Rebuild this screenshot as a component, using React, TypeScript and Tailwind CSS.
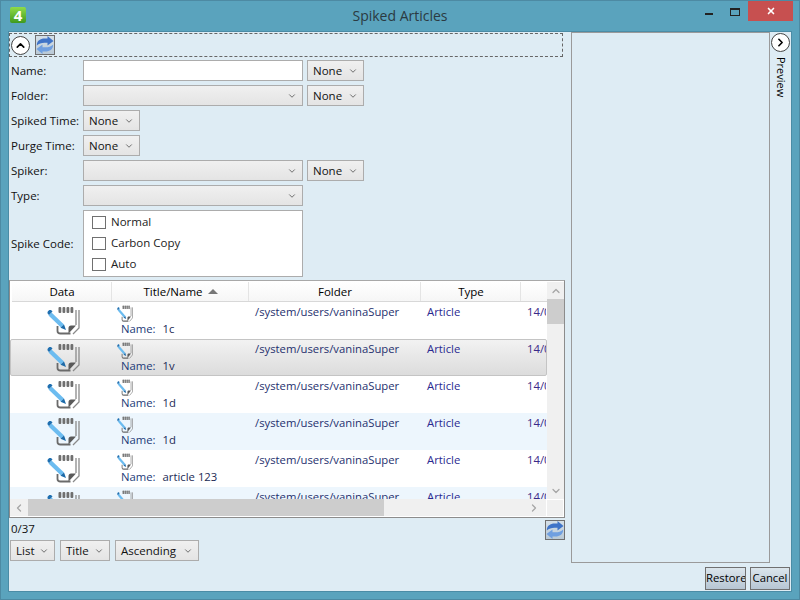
import { ChevronDown, ChevronLeft, ChevronRight, ChevronUp, X } from "lucide-react";

const rows = [
  { name: "1c", kind: "plain" },
  { name: "1v", kind: "selected" },
  { name: "1d", kind: "plain" },
  { name: "1d", kind: "alt" },
  { name: "article 123", kind: "plain" },
  { name: "", kind: "alt" },
];

function SpikeIcon({ className }: { className: string }) {
  return (
    <svg viewBox="0 0 33 29" preserveAspectRatio="none" className={className}>
      <g fill="#6f6f6f">
        <rect x="11.5" y="1" width="2.8" height="6" rx="1" />
        <rect x="15.500" y="1" width="2.8" height="6" rx="1" />
        <rect x="19.500" y="1" width="2.8" height="6" rx="1" />
        <rect x="23.500" y="1" width="2.8" height="6" rx="1" />
      </g>
      <path d="M29 4v15M32 4v18l-6 6" fill="none" stroke="#8a8a8a" strokeWidth="1.3" />
      <path d="M10.500 20v5c0 2 1 2.500 3 2.500h10" fill="none" stroke="#6a6a6a" strokeWidth="1.8" />
      <path d="M29 19.500h-5c-1.500 0-2.500 1-2.500 2.500v5.500z" fill="#5a5a5a" />
      <path d="M4.500 6.500l12.500 12 -3 3L1.500 9.500z" fill="#6cbcf0" />
      <path d="M.8 5.500c.7-1.500 2.300-2 3.500-1.200l1.200 1.200 -3.500 3.500 -1-1c-.6-.7-.7-1.600-.2-2.500z" fill="#1f6fb0" />
      <path d="M17 18.500l2 5.500 -5.500-2.200z" fill="#1d6aa8" />
    </svg>
  );
}

function RefreshButton() {
  return (
    <button type="button" className="flex h-[20px] w-[20px] items-center justify-center border border-[#707070] bg-[linear-gradient(#d5e0e8,#b9c9d6)]">
      <svg viewBox="0 0 18 18" className="h-[18px] w-[18px]">
        <path d="M.8 9.500C.8 4.500 4.500 2.500 8.500 2.500h3V0L17.500 5l-6 4.500V6.700H8.500C5.500 6.700 2.800 7.500.8 9.500z" fill="#3f74c8" />
        <path d="M17.200 8.500c0 5-3.700 7-7.700 7h-3V18L.5 13l6-4.500v2.800h3c3 0 5.700-.8 7.700-2.800z" fill="#6f9fe0" />
      </svg>
    </button>
  );
}

function RoundButton({ direction }: { direction: "up" | "right" }) {
  return (
    <button type="button" className="flex h-[19px] w-[19px] items-center justify-center rounded-full border border-[#444] bg-white">
      {direction === "up" ? (
        <ChevronUp className="h-[13px] w-[13px] text-black" strokeWidth={3} />
      ) : (
        <ChevronRight className="h-[13px] w-[13px] text-black" strokeWidth={3} />
      )}
    </button>
  );
}

function Combo({ label, className }: { label?: string; className: string }) {
  return (
    <div className={`flex h-[21px] items-center justify-between border border-[#acacac] bg-[linear-gradient(#f0f0f0,#e4e4e4)] pl-[5px] pr-[5px] text-[#111] ${className}`}>
      <span>{label}</span>
      <ChevronDown className="h-[10px] w-[10px] text-[#555]" strokeWidth={2} />
    </div>
  );
}

function FieldRow({ label, children }: { label: string; children: React.ReactNode }) {
  return (
    <div className="flex h-[21px] items-center">
      <label className="w-[74px] shrink-0 pl-[2px] text-[#111]">{label}</label>
      <div className="flex items-center gap-[4px]">{children}</div>
    </div>
  );
}

function Check({ label }: { label: string }) {
  return (
    <div className="flex h-[21px] items-center gap-[5px] text-[#222]">
      <span className="h-[13px] w-[14px] border border-[#707070] bg-white" />
      <span className="pb-[2px]">{label}</span>
    </div>
  );
}

function HeaderCell({ className, children }: { className: string; children: React.ReactNode }) {
  return (
    <div className={`flex h-full shrink-0 items-center justify-center border-r border-[#e4e4e4] pl-[1px] text-black ${className}`}>
      {children}
    </div>
  );
}

function ResultRow({ name, kind }: { name: string; kind: string }) {
  const tone =
    kind === "selected"
      ? "rounded-[2px] border border-[#c4c4c4] bg-[linear-gradient(#f2f2f2,#dcdcdc)]"
      : kind === "alt"
        ? "border border-transparent bg-[#edf6fd]"
        : "border border-transparent bg-white";
  return (
    <div className={`flex h-[37px] shrink-0 text-[11.3px] ${tone}`}>
      <div className="flex w-[101px] shrink-0 justify-center pl-[3px] pt-[3px]">
        <SpikeIcon className="h-[29px] w-[33px]" />
      </div>
      <div className="w-[137px] shrink-0 pl-[5px] pt-[2px] text-[#1c3a78]">
        <SpikeIcon className="h-[17px] w-[16px]" />
        <div className="-mt-[1px] flex gap-[7px] pl-[4px] leading-[16px]">
          <span>Name:</span>
          <span className="text-[#222a55]">{name}</span>
        </div>
      </div>
      <div className="w-[172px] shrink-0 pl-[6px] leading-[18px] text-[#25306e]">/system/users/vaninaSuper</div>
      <div className="w-[100px] shrink-0 pl-[6px] leading-[18px] text-[#2a2a90]">Article</div>
      <div className="w-[25px] shrink-0 overflow-hidden whitespace-nowrap pl-[6px] leading-[18px] text-[#3a2a88]">14/02/2014</div>
    </div>
  );
}

export default function App() {
  return (
    <div className="flex h-[600px] w-[800px] flex-col overflow-hidden border border-[#4d8aa3] bg-[#5aa3bd] text-[11.5px] font-['Open_Sans',sans-serif]">
      <header className="flex h-[30px] shrink-0 items-start">
        <div className="ml-[9px] mt-[6px] flex h-[16px] w-[16px] items-center justify-center rounded-[2px] bg-[linear-gradient(#8fdc4a,#3f9a1e)] text-[15px] font-bold leading-none text-white">
          4
        </div>
        <h1 className="ml-[324px] mt-[5px] w-[100px] whitespace-nowrap text-center text-[14px] leading-[19px] text-[#2b3a42]">Spiked Articles</h1>
        <div className="ml-auto flex items-start">
          <span className="mr-[17px] mt-[12px] h-[2px] w-[8px] bg-[#222]" />
          <span className="mr-[8px] mt-[7px] h-[8px] w-[10px] border border-t-2 border-[#222]" />
          <button type="button" className="mr-[6px] flex h-[20px] w-[45px] items-center justify-center bg-[#c75050]">
            <X className="h-[10px] w-[10px] text-white" strokeWidth={4} />
          </button>
        </div>
      </header>

      <main className="mx-[7px] flex h-[561px] flex-col border border-[#4b8ca6] bg-[#deecf4]">
        <div className="flex h-[532px] shrink-0">
          <section className="mt-[1px] flex w-[556px] shrink-0 flex-col">
            <div className="flex h-[24px] w-[554px] shrink-0 items-center gap-[5px] border border-dashed border-[#666] pl-[1px]">
              <RoundButton direction="up" />
              <RefreshButton />
            </div>

            <div className="mt-[3px] flex flex-col gap-[4px]">
              <FieldRow label="Name:">
                <div className="h-[21px] w-[220px] border border-[#acacac] bg-white" />
                <Combo label="None" className="w-[57px]" />
              </FieldRow>
              <FieldRow label="Folder:">
                <Combo className="w-[220px]" />
                <Combo label="None" className="w-[57px]" />
              </FieldRow>
              <FieldRow label="Spiked Time:">
                <Combo label="None" className="w-[57px]" />
              </FieldRow>
              <FieldRow label="Purge Time:">
                <Combo label="None" className="w-[57px]" />
              </FieldRow>
              <FieldRow label="Spiker:">
                <Combo className="w-[220px]" />
                <Combo label="None" className="w-[57px]" />
              </FieldRow>
              <FieldRow label="Type:">
                <Combo className="w-[220px]" />
              </FieldRow>
              <div className="flex items-center">
                <label className="w-[74px] shrink-0 pl-[2px] text-[#111]">Spike Code:</label>
                <div className="flex h-[67px] w-[220px] flex-col justify-center border border-[#acacac] bg-white pl-[8px]">
                  <Check label="Normal" />
                  <Check label="Carbon Copy" />
                  <Check label="Auto" />
                </div>
              </div>
            </div>

            <div className="mt-[3px] flex h-[238px] w-[556px] shrink-0 flex-col border border-[#8c8c8c] border-t-[#a8a8a8] bg-white py-[1px] pr-[1px]">
              <div className="flex h-[217px] shrink-0">
                <div className="flex w-[537px] shrink-0 flex-col overflow-hidden">
                  <div className="ml-[2px] flex h-[20px] shrink-0 items-center border-b border-[#d8d8d8] bg-[linear-gradient(#ffffff,#f6f6f6)]">
                    <HeaderCell className="w-[100px]">Data</HeaderCell>
                    <HeaderCell className="w-[137px] gap-[5px]">
                      <span>Title/Name</span>
                      <span className="h-0 w-0 border-x-[5px] border-b-[5px] border-x-transparent border-b-[#777]" />
                    </HeaderCell>
                    <HeaderCell className="w-[172px]">Folder</HeaderCell>
                    <HeaderCell className="w-[100px]">Type</HeaderCell>
                  </div>
                  <div className="flex min-h-0 flex-1 flex-col overflow-hidden">
                    {rows.map((row, index) => (
                      <ResultRow key={index} name={row.name} kind={row.kind} />
                    ))}
                  </div>
                </div>
                <div className="flex w-[17px] shrink-0 flex-col bg-[#f0f0f0]">
                  <div className="flex h-[17px] shrink-0 items-center justify-center">
                    <ChevronUp className="h-[12px] w-[12px] text-[#a6a6a6]" strokeWidth={2.5} />
                  </div>
                  <div className="h-[25px] shrink-0 bg-[#cdcdcd]" />
                  <div className="flex-1" />
                  <div className="flex h-[17px] shrink-0 items-center justify-center">
                    <ChevronDown className="h-[12px] w-[12px] text-[#a6a6a6]" strokeWidth={2.5} />
                  </div>
                </div>
              </div>
              <div className="flex h-[17px] shrink-0 bg-[#f0f0f0]">
                <div className="flex w-[18px] shrink-0 items-center justify-center">
                  <ChevronLeft className="h-[12px] w-[12px] text-[#a6a6a6]" strokeWidth={2.5} />
                </div>
                <div className="w-[356px] shrink-0 bg-[#cdcdcd]" />
                <div className="flex flex-1 items-center justify-end pr-[6px]">
                  <ChevronRight className="h-[12px] w-[12px] text-[#a6a6a6]" strokeWidth={2.5} />
                </div>
                <div className="w-[17px] shrink-0 border-l border-t border-white" />
              </div>
            </div>

            <div className="mt-[2px] flex h-[20px] w-[556px] shrink-0 items-center justify-between pl-[2px] text-[#111]">
              <span className="pb-[2px]">0/37</span>
              <RefreshButton />
            </div>
            <div className="ml-[1px] flex gap-[5px]">
              <Combo label="List" className="w-[45px]" />
              <Combo label="Title" className="w-[50px]" />
              <Combo label="Ascending" className="w-[84px]" />
            </div>
          </section>

          <aside className="ml-[6px] h-[531px] w-[199px] shrink-0 border border-[#9a9a9a] bg-[#deecf4]" />
          <div className="flex w-[21px] shrink-0 flex-col items-center pt-[1px]">
            <RoundButton direction="right" />
            <span className="mt-[5px] text-[11px] leading-[14px] text-black [writing-mode:vertical-rl]">Preview</span>
          </div>
        </div>

        <footer className="flex flex-1 items-start justify-end gap-[4px] pr-[1px] pt-[3px]">
          <button type="button" className="h-[23px] w-[41px] overflow-hidden whitespace-nowrap border border-[#707070] bg-[linear-gradient(#dbe5ec,#b7c6d3)] text-[11.3px] text-black">Restore</button>
          <button type="button" className="h-[23px] w-[40px] overflow-hidden whitespace-nowrap border border-[#707070] bg-[linear-gradient(#dbe5ec,#b7c6d3)] text-[11.3px] text-black">Cancel</button>
        </footer>
      </main>
    </div>
  );
}
